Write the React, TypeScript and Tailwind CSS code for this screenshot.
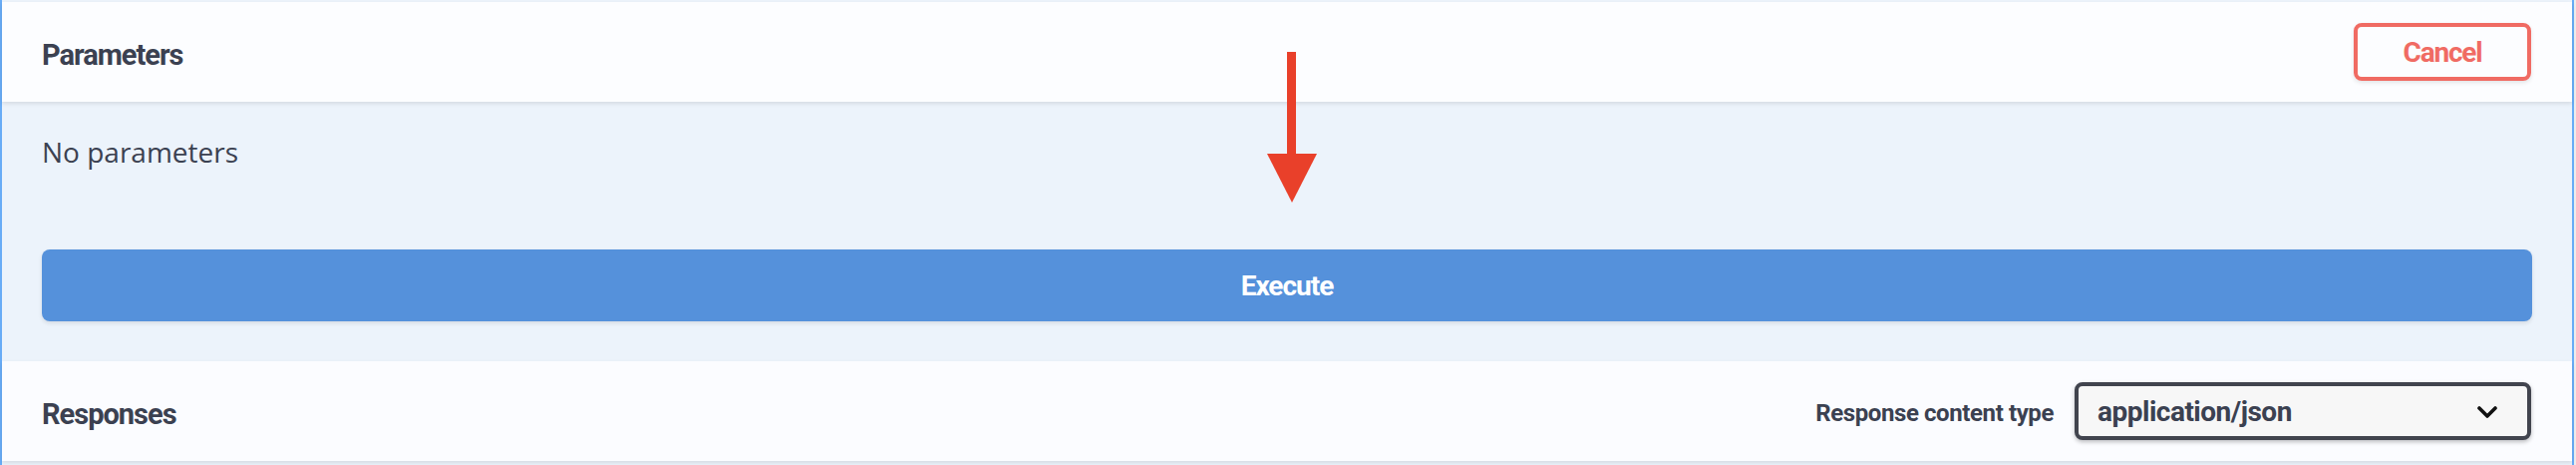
import React from "react";

const heading = { fontFamily: "Roboto, 'Noto Sans', sans-serif" };

export default function App() {
  return (
    <div className="w-[2584px] h-[466px] bg-[#ededed] overflow-hidden">
      <div className="relative w-[2582px] h-[466px] border-x-2 border-[#68acf6] bg-[#ecf3fb] pt-[2px] flex flex-col">
        {/* Parameters header */}
        <div
          className="h-[100px] bg-[#fcfdff] shadow-[0_2px_4px_rgba(0,0,0,0.1)] flex items-center pl-[40px] pr-[41px] relative z-10"
          style={heading}
        >
          <h4 className="flex-1 m-0 pt-[5px] text-[29px] leading-[40px] font-bold text-[#3b4151] tracking-[-1px]">
            Parameters
          </h4>
          <button className="w-[178px] h-[58px] pt-[2px] border-[4px] border-[#f06b63] rounded-[8px] bg-transparent text-[#f06b63] text-[28px] font-bold tracking-[-1.2px] shadow-[0_2px_4px_rgba(0,0,0,0.1)] flex items-center justify-center">
            Cancel
          </button>
        </div>

        {/* Body */}
        <div className="h-[260px] px-[40px] pt-[29px]">
          <p
            className="m-0 text-[28px] leading-[42px] text-[#3b4151]"
            style={{ fontFamily: "'Open Sans', sans-serif" }}
          >
            No parameters
          </p>
          <button
            className="mt-[77px] w-full h-[72px] pt-[2px] rounded-[8px] bg-[#5591db] text-white text-[28px] font-bold tracking-[-1px] shadow-[0_2px_4px_rgba(0,0,0,0.1)] flex items-center justify-center"
            style={heading}
          >
            Execute
          </button>
        </div>

        {/* Responses header */}
        <div
          className="h-[100px] bg-[#fbfcff] shadow-[0_2px_4px_rgba(0,0,0,0.1)] flex items-center pl-[40px] pr-[41px]"
          style={heading}
        >
          <h4 className="flex-1 m-0 pt-[5px] text-[29px] leading-[40px] font-bold text-[#3b4151] tracking-[-1px]">
            Responses
          </h4>
          <div className="flex items-center">
            <span className="pt-[3px] text-[24px] font-bold text-[#3b4151] tracking-[-0.4px] mr-[21px]">
              Response content type
            </span>
            <div className="w-[458px] h-[58px] border-[4px] border-[#41444e] rounded-[8px] bg-[#f7f7f7] shadow-[0_2px_4px_rgba(0,0,0,0.25)] flex items-center pl-[19px] pr-[30px]">
              <span className="flex-1 pt-[2px] text-[28px] font-bold text-[#3b4151] tracking-[-0.5px]">
                application/json
              </span>
              <svg width="20" height="12" viewBox="0 0 20 12" className="mt-[1px]">
                <path d="M2 2 L10 10 L18 2" fill="none" stroke="#111" strokeWidth="3.6" strokeLinecap="round" strokeLinejoin="round" />
              </svg>
            </div>
          </div>
        </div>

        {/* Annotation arrow */}
        <svg
          className="absolute left-[1258px] top-[50px] z-20"
          width="64"
          height="156"
          viewBox="0 0 64 156"
        >
          <rect x="31" y="2" width="9" height="104" fill="#e9402a" />
          <polygon points="11,104 61,104 36,153" fill="#e9402a" />
        </svg>
      </div>
    </div>
  );
}
